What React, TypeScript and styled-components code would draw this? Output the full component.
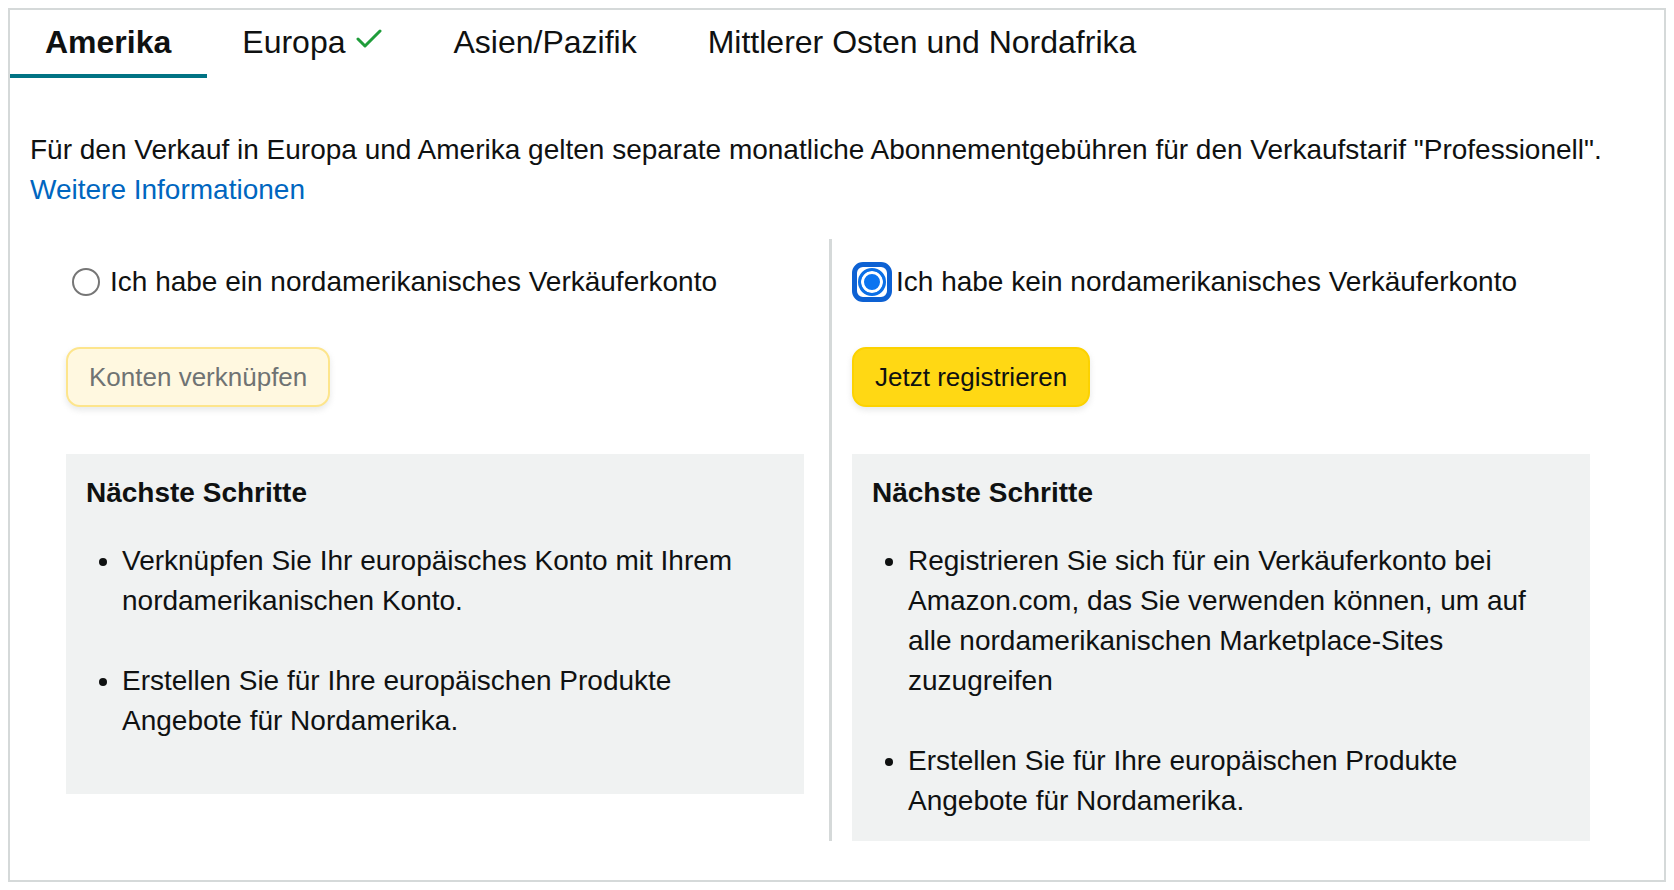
import React from "react";
import styled, { createGlobalStyle } from "styled-components";

const GlobalStyle = createGlobalStyle`
  html, body { background: #ffffff; }
  body {
    margin: 8px;
    font-family: "Liberation Sans", Arial, Helvetica, sans-serif;
    color: #0f1111;
  }
  * { box-sizing: border-box; }
`;

const Frame = styled.div`
  border: 2px solid #d5d9d9;
  padding-bottom: 39px;
`;

const TabBar = styled.div`
  display: flex;
  height: 68px;
`;

const Tab = styled.div<{ $active?: boolean }>`
  display: flex;
  align-items: center;
  gap: 11px;
  padding: 0 36px 0 35px;
  font-size: 32px;
  font-weight: ${(p) => (p.$active ? 700 : 400)};
  border-bottom: 4px solid ${(p) => (p.$active ? "#017384" : "transparent")};
  color: #0f1111;
  white-space: nowrap;
`;

const Check = styled.svg`
  width: 26px;
  height: 20px;
  margin-top: -6px;
`;

const Content = styled.div`
  padding: 0 20px;
`;

const Intro = styled.p`
  margin: 52px 0 0;
  font-size: 28px;
  line-height: 40px;
`;

const MoreLink = styled.a`
  display: block;
  color: #0066c0;
  text-decoration: none;
`;

const Columns = styled.div`
  display: flex;
  margin-top: 29px;
  padding-left: 36px;
`;

const Column = styled.div`
  width: 738px;
  padding-top: 23px;
  display: flex;
  flex-direction: column;
  align-items: flex-start;
`;

const Divider = styled.div`
  width: 3px;
  background: #d5d9d9;
  margin: 0 20px 0 25px;
`;

const RadioRow = styled.label`
  display: flex;
  align-items: center;
  gap: 10px;
  padding-left: 6px;
  height: 40px;
  font-size: 28px;
  line-height: 40px;
`;

const Radio = styled.span<{ $checked?: boolean }>`
  position: relative;
  flex: none;
  width: 28px;
  height: 28px;
  border-radius: 50%;
  border: ${(p) => (p.$checked ? "3px solid #0b6fe6" : "2px solid #767676")};
  background: ${(p) => (p.$checked ? "#0b74f0" : "#ffffff")};
  box-shadow: ${(p) => (p.$checked ? "inset 0 0 0 3px #ffffff" : "none")};

  &::after {
    content: "";
    display: ${(p) => (p.$checked ? "block" : "none")};
    position: absolute;
    inset: -9px;
    border: 5px solid #0d61d3;
    border-radius: 11px;
  }
`;

const Button = styled.button<{ $primary?: boolean }>`
  margin-top: 45px;
  height: 60px;
  padding: 0 21px;
  border-radius: 14px;
  font-family: inherit;
  font-size: 26px;
  border: 2px solid ${(p) => (p.$primary ? "#fcd200" : "#fde58c")};
  background: ${(p) => (p.$primary ? "#ffd814" : "#fff8e0")};
  color: ${(p) => (p.$primary ? "#0f1111" : "#6f7373")};
  box-shadow: 0 3px 6px rgba(213, 217, 217, 0.6);
  cursor: ${(p) => (p.$primary ? "pointer" : "default")};
`;

const StepsBox = styled.div<{ $minHeight?: number }>`
  margin-top: 47px;
  align-self: stretch;
  background: #f0f2f2;
  padding: 19px 20px 20px;
  min-height: ${(p) => (p.$minHeight ? `${p.$minHeight}px` : "0")};
`;

const StepsTitle = styled.h3`
  margin: 0;
  font-size: 28px;
  line-height: 40px;
  font-weight: 700;
`;

const StepsList = styled.ul`
  margin: 28px 0 0;
  padding-left: 36px;
  font-size: 28px;
  line-height: 40px;

  li + li {
    margin-top: 40px;
  }
`;

export default function App() {
  return (
    <>
      <GlobalStyle />
      <Frame>
        <TabBar>
          <Tab $active>Amerika</Tab>
          <Tab>
            Europa
            <Check viewBox="0 0 26 20">
              <polyline
                points="2,10 9,17 24,2"
                fill="none"
                stroke="#1f9d3a"
                strokeWidth="3"
                strokeLinecap="round"
                strokeLinejoin="round"
              />
            </Check>
          </Tab>
          <Tab>Asien/Pazifik</Tab>
          <Tab>Mittlerer Osten und Nordafrika</Tab>
        </TabBar>
        <Content>
          <Intro>
            Für den Verkauf in Europa und Amerika gelten separate monatliche
            Abonnementgebühren für den Verkaufstarif "Professionell".
            <MoreLink href="#">Weitere Informationen</MoreLink>
          </Intro>
          <Columns>
            <Column>
              <RadioRow>
                <Radio />
                Ich habe ein nordamerikanisches Verkäuferkonto
              </RadioRow>
              <Button disabled>Konten verknüpfen</Button>
              <StepsBox $minHeight={340}>
                <StepsTitle>Nächste Schritte</StepsTitle>
                <StepsList>
                  <li>
                    Verknüpfen Sie Ihr europäisches Konto mit Ihrem
                    nordamerikanischen Konto.
                  </li>
                  <li>
                    Erstellen Sie für Ihre europäischen Produkte Angebote für
                    Nordamerika.
                  </li>
                </StepsList>
              </StepsBox>
            </Column>
            <Divider />
            <Column>
              <RadioRow>
                <Radio $checked />
                Ich habe kein nordamerikanisches Verkäuferkonto
              </RadioRow>
              <Button $primary>Jetzt registrieren</Button>
              <StepsBox>
                <StepsTitle>Nächste Schritte</StepsTitle>
                <StepsList>
                  <li>
                    Registrieren Sie sich für ein Verkäuferkonto bei
                    Amazon.com, das Sie verwenden können, um auf alle
                    nordamerikanischen Marketplace-Sites zuzugreifen
                  </li>
                  <li>
                    Erstellen Sie für Ihre europäischen Produkte Angebote für
                    Nordamerika.
                  </li>
                </StepsList>
              </StepsBox>
            </Column>
          </Columns>
        </Content>
      </Frame>
    </>
  );
}
